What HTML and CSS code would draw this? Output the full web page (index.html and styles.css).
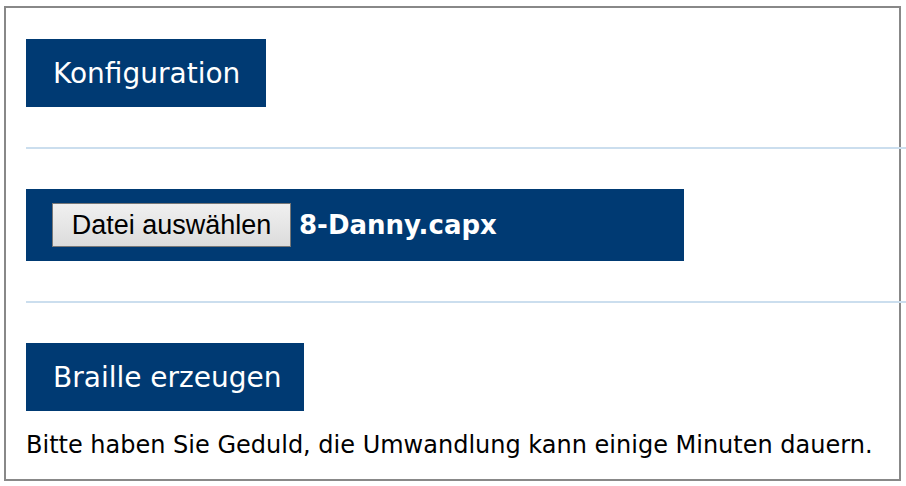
FILE: index.html
```html
<!DOCTYPE html>
<html lang="de">
<head>
  <meta charset="UTF-8" />
  <title>Braille</title>
  <link rel="stylesheet" href="styles.css">
</head>
<body>
  <div class="frame">
    <div class="block first">
      <button class="blue-btn config">Konfiguration</button>
    </div>
    <hr class="sep" />
    <div class="block">
      <div class="file-box">
        <span class="file-btn">Datei auswählen</span>
        <span class="file-name">8-Danny.capx</span>
      </div>
    </div>
    <hr class="sep" />
    <div class="block">
      <button class="blue-btn braille">Braille erzeugen</button>
      <p class="note">Bitte haben Sie Geduld, die Umwandlung kann einige Minuten dauern.</p>
    </div>
  </div>
</body>
</html>
```

FILE: styles.css
```css
body {
  margin: 0;
  padding: 6px 0 0 4px;
  font-family: "DejaVu Sans", Verdana, sans-serif;
  background: #fff;
}
.frame {
  width: 897px;
  height: 475px;
  border: 2px solid #888;
  padding: 0 0 0 20px;
  box-sizing: border-box;
}
.block {
  padding-top: 40px;
}
.block.first {
  padding-top: 31px;
}
.blue-btn {
  display: block;
  background: #003a73;
  color: #fff;
  border: none;
  font-family: "DejaVu Sans", Verdana, sans-serif;
  font-size: 28px;
  height: 68px;
  padding: 0 0 0 27px;
  margin: 0;
  text-align: left;
  cursor: pointer;
}
.config {
  width: 240px;
}
.braille {
  width: 278px;
}
.sep {
  border: none;
  border-top: 2px solid #cbdeee;
  margin: 40px -20px 0 0;
  width: 880px;
}
.file-box {
  width: 658px;
  height: 72px;
  background: #003a73;
  display: flex;
  align-items: center;
  padding-left: 26px;
  box-sizing: border-box;
}
.file-btn {
  font-family: "Liberation Sans", Arial, sans-serif;
  font-size: 27px;
  color: #000;
  background: linear-gradient(#f0f0f0, #dcdcdc);
  border: 1px solid #777;
  height: 44px;
  width: 239px;
  box-sizing: border-box;
  display: flex;
  align-items: center;
  justify-content: center;
}
.file-name {
  color: #fff;
  font-size: 26px;
  margin-left: 8px;
  font-weight: bold;
}
.note {
  margin: 20px 0 0;
  font-size: 24px;
  color: #000;
}
```
